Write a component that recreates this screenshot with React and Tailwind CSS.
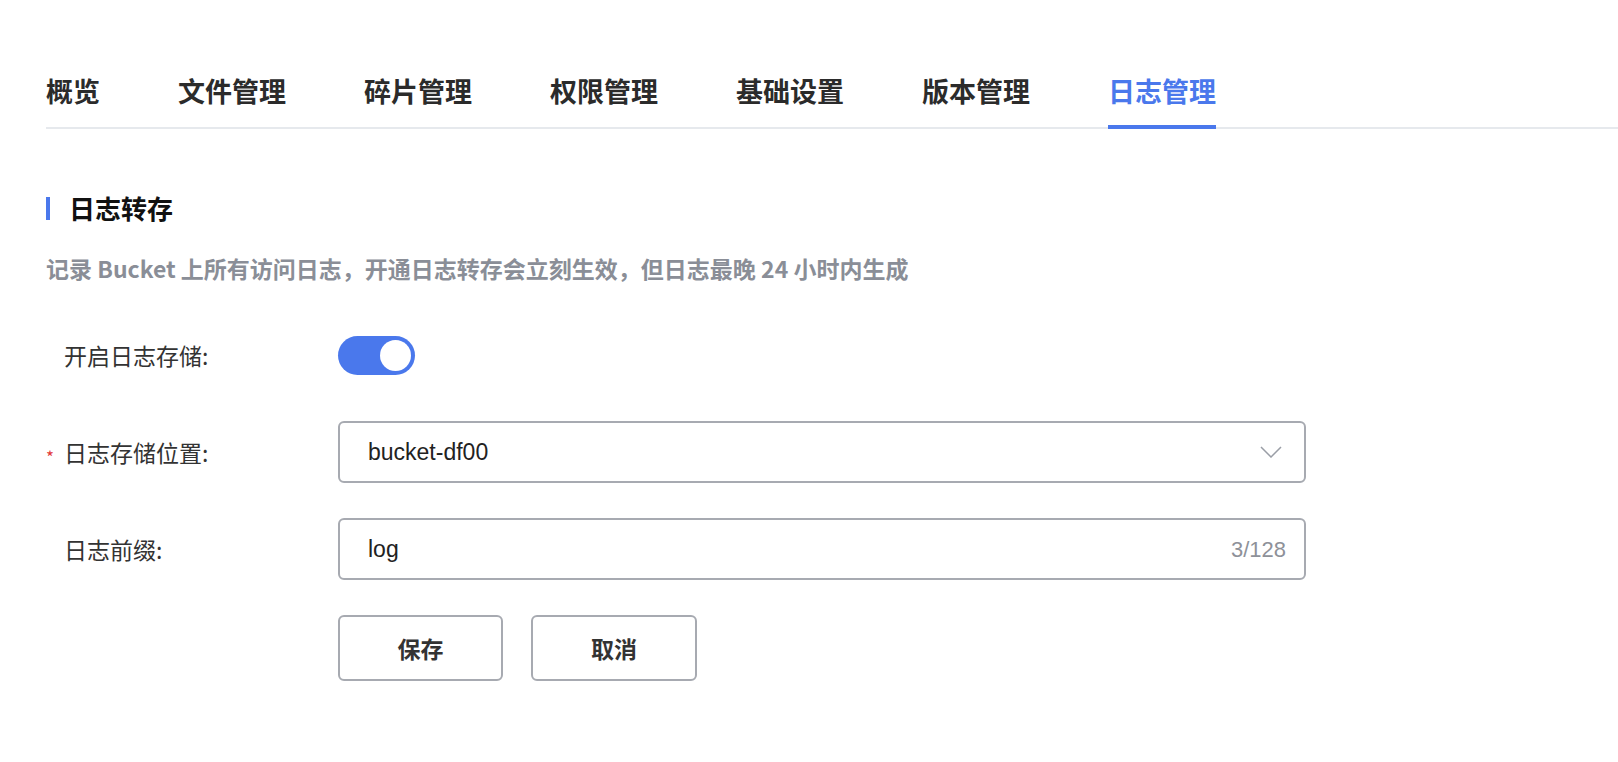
import { useState } from 'react'

const tabs = ['概览', '文件管理', '碎片管理', '权限管理', '基础设置', '版本管理', '日志管理']

export default function App() {
  const [enabled, setEnabled] = useState(true)
  const active = '日志管理'

  return (
    <div className="min-h-screen bg-white pl-[46px] pt-[72px] text-[#333] font-['Noto_Sans_CJK_SC','Noto_Sans',sans-serif]">
      {/* 顶部标签 */}
      <div className="flex gap-[78px] border-b-2 border-[#e6e9ed]">
        {tabs.map(t => (
          <div
            key={t}
            className={`relative pb-[17px] text-[27px] leading-[38px] font-bold ${t === active ? 'text-[#4a78ec]' : 'text-[#2b2b2b]'}`}
          >
            {t}
            {t === active && <span className="absolute left-0 right-0 -bottom-[2px] h-[4px] bg-[#4a78ec]" />}
          </div>
        ))}
      </div>

      {/* 日志转存 */}
      <div className="mt-[62px] flex items-center gap-[19px]">
        <span className="w-[4px] h-[23px] bg-[#4a78ec]" />
        <h2 className="text-[26px] leading-[34px] font-bold text-[#111]">日志转存</h2>
      </div>
      <p className="mt-[28px] text-[23px] leading-[30px] font-semibold text-[#8a8e97]">
        记录 Bucket 上所有访问日志，开通日志转存会立刻生效，但日志最晚 24 小时内生成
      </p>

      <div className="mt-[41px] flex flex-col gap-[35px] text-[23px]">
        <div className="flex items-center h-[62px]">
          <label className="w-[292px] pl-[18px] text-[#333]">开启日志存储:</label>
          <button
            onClick={() => setEnabled(!enabled)}
            className={`w-[77px] h-[39px] rounded-full flex items-center px-[4px] ${enabled ? 'bg-[#4a78ec] justify-end' : 'bg-[#c8ccd3] justify-start'}`}
          >
            <span className="w-[31px] h-[31px] rounded-full bg-white" />
          </button>
        </div>

        <div className="flex items-center h-[62px]">
          <label className="w-[292px] flex items-center text-[#333]">
            <span className="w-[18px] pt-[8px] text-[#e23b3b] text-[17px] leading-none">*</span>
            日志存储位置:
          </label>
          <div className="w-[968px] h-[62px] border-2 border-[#a7aab1] rounded-[6px] flex items-center justify-between pl-[28px] pr-[22px]">
            <span className="font-['Liberation_Sans',sans-serif] text-[#222]">bucket-df00</span>
            <svg width="22" height="12" viewBox="0 0 22 12" fill="none" stroke="#9a9ea6" strokeWidth="1.5">
              <path d="M1 1l10 10L21 1" />
            </svg>
          </div>
        </div>

        <div className="flex items-center h-[62px]">
          <label className="w-[292px] pl-[18px] text-[#333]">日志前缀:</label>
          <div className="w-[968px] h-[62px] border-2 border-[#a7aab1] rounded-[6px] flex items-center justify-between pl-[28px] pr-[18px]">
            <span className="font-['Liberation_Sans',sans-serif] text-[#222]">log</span>
            <span className="font-['Liberation_Sans',sans-serif] text-[22px] text-[#8e9199]">3/128</span>
          </div>
        </div>

        <div className="flex gap-[28px] pl-[292px]">
          <button className="w-[165px] h-[66px] border-2 border-[#a7aab1] rounded-[6px] text-[23px] font-semibold text-[#333]">保存</button>
          <button className="w-[166px] h-[66px] border-2 border-[#a7aab1] rounded-[6px] text-[23px] font-semibold text-[#333]">取消</button>
        </div>
      </div>
    </div>
  )
}
